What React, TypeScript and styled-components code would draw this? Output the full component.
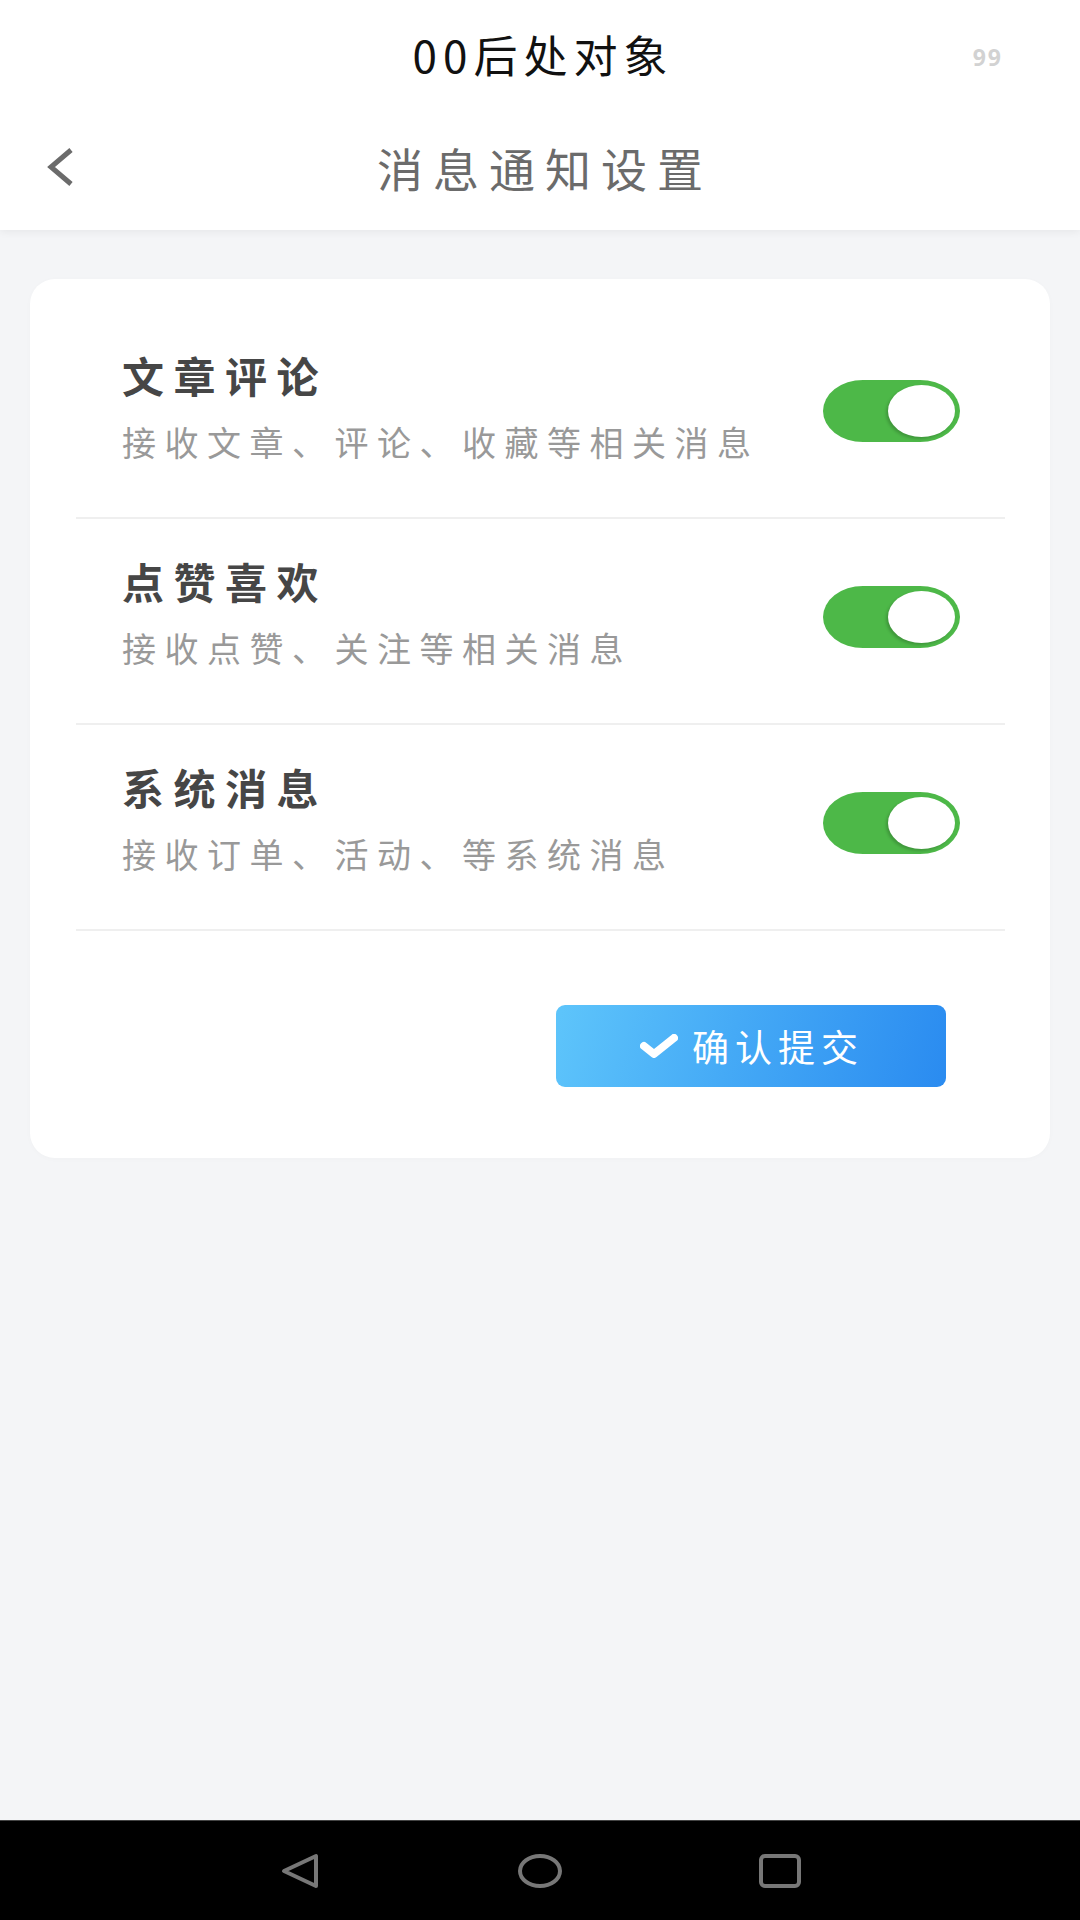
import React, { useState } from 'react';
import styled, { createGlobalStyle } from 'styled-components';

const GlobalStyle = createGlobalStyle`
    html, body {
        margin: 0;
        padding: 0;
        background: #f4f5f7;
        font-family: "Noto Sans CJK SC", "Noto Sans", sans-serif;
    }
    * {
        box-sizing: border-box;
    }
`;

interface INotifyItem {
    key: string;
    title: string;
    desc: string;
}

const items: INotifyItem[] = [
    { key: 'article', title: '文章评论', desc: '接收文章、评论、收藏等相关消息' },
    { key: 'like', title: '点赞喜欢', desc: '接收点赞、关注等相关消息' },
    { key: 'system', title: '系统消息', desc: '接收订单、活动、等系统消息' },
];

const App: React.FC = () => {
    const [enabled, setEnabled] = useState<Record<string, boolean>>({
        article: true,
        like: true,
        system: true,
    });

    const toggle = (key: string) => setEnabled(prev => ({ ...prev, [key]: !prev[key] }));

    return (
        <Screen>
            <GlobalStyle />
            <Header>
                <StatusRow>
                    <span />
                    <AppName>00后处对象</AppName>
                    <Badge>99</Badge>
                </StatusRow>
                <NavRow>
                    <BackButton aria-label="返回">
                        <svg width="28" height="40" viewBox="0 0 28 40">
                            <polyline points="24,3 4,20 24,37" fill="none" stroke="#6b6b6b" strokeWidth="5" />
                        </svg>
                    </BackButton>
                    <PageTitle>消息通知设置</PageTitle>
                    <span />
                </NavRow>
            </Header>
            <Main>
                <Card>
                    {items.map(item => (
                        <Row key={item.key}>
                            <TextBlock>
                                <ItemTitle>{item.title}</ItemTitle>
                                <ItemDesc>{item.desc}</ItemDesc>
                            </TextBlock>
                            <Switch $on={enabled[item.key]} onClick={() => toggle(item.key)}>
                                <Knob $on={enabled[item.key]} />
                            </Switch>
                        </Row>
                    ))}
                    <Actions>
                        <SubmitButton>
                            <svg width="38" height="24" viewBox="0 0 38 24">
                                <polyline
                                    points="4,12 14,20 34,4"
                                    fill="none"
                                    stroke="#fff"
                                    strokeWidth="8"
                                    strokeLinejoin="round"
                                    strokeLinecap="round"
                                />
                            </svg>
                            <span>确认提交</span>
                        </SubmitButton>
                    </Actions>
                </Card>
            </Main>
            <SystemBar>
                <svg width="44" height="36" viewBox="0 0 44 36">
                    <path d="M38 3 L38 33 L6 18 Z" fill="none" stroke="#777" strokeWidth="4" strokeLinejoin="round" />
                </svg>
                <svg width="44" height="36" viewBox="0 0 44 36">
                    <ellipse cx="22" cy="18" rx="20" ry="15" fill="none" stroke="#777" strokeWidth="4" />
                </svg>
                <svg width="44" height="36" viewBox="0 0 44 36">
                    <rect x="3" y="3" width="38" height="30" rx="4" fill="none" stroke="#777" strokeWidth="4" />
                </svg>
            </SystemBar>
        </Screen>
    );
};

export default App;

const Screen = styled.div`
    display: flex;
    flex-direction: column;
    min-height: 1920px;
    background: #f4f5f7;
`;

const Header = styled.header`
    background: #fff;
    box-shadow: 0 2px 8px rgba(0, 0, 0, 0.06);
    position: relative;
    z-index: 1;
`;

const StatusRow = styled.div`
    display: grid;
    grid-template-columns: 1fr auto 1fr;
    align-items: center;
    height: 108px;
`;

const AppName = styled.h1`
    margin: 0;
    padding-left: 6px;
    font-size: 44px;
    font-weight: 400;
    letter-spacing: 6px;
    line-height: 56px;
    color: #111;
`;

const Badge = styled.span`
    justify-self: end;
    padding-right: 77px;
    margin-top: 6px;
    font-family: "Open Sans", "Noto Sans", sans-serif;
    font-size: 23px;
    font-weight: 700;
    letter-spacing: 2px;
    color: #d2d2d2;
`;

const NavRow = styled.div`
    display: grid;
    grid-template-columns: 1fr auto 1fr;
    align-items: center;
    height: 122px;
    padding-bottom: 4px;
`;

const BackButton = styled.button`
    justify-self: start;
    display: flex;
    align-items: center;
    padding: 0 0 0 47px;
    border: 0;
    background: none;
    cursor: pointer;
`;

const PageTitle = styled.h2`
    margin: 0;
    padding-left: 10px;
    font-size: 46px;
    font-weight: 400;
    letter-spacing: 10px;
    line-height: 56px;
    color: #6b6b6b;
`;

const Main = styled.main`
    flex: 1;
    padding: 49px 30px 0;
`;

const Card = styled.section`
    background: #fff;
    border-radius: 25px;
    padding: 34px 0 71px;
    box-shadow: 0 1px 6px rgba(0, 0, 0, 0.02);
`;

const Row = styled.div`
    display: flex;
    align-items: center;
    justify-content: space-between;
    margin: 0 45px 0 46px;
    padding: 36px 45px 52px 46px;
    border-bottom: 2px solid #efefef;
`;

const TextBlock = styled.div`
    display: flex;
    flex-direction: column;
    gap: 18px;
`;

const ItemTitle = styled.div`
    font-size: 42px;
    font-weight: 700;
    letter-spacing: 9.5px;
    line-height: 52px;
    color: #464646;
`;

const ItemDesc = styled.div`
    font-size: 34px;
    font-weight: 400;
    letter-spacing: 8.5px;
    line-height: 46px;
    color: #999;
`;

const Switch = styled.button<{ $on: boolean }>`
    position: relative;
    flex-shrink: 0;
    width: 137px;
    height: 62px;
    margin-top: 8px;
    padding: 0;
    border: 0;
    border-radius: 40px / 31px;
    background: ${p => (p.$on ? '#4db848' : '#dcdcdc')};
    cursor: pointer;
`;

const Knob = styled.span<{ $on: boolean }>`
    position: absolute;
    top: 5px;
    ${p => (p.$on ? 'right: 5px;' : 'left: 5px;')}
    width: 67px;
    height: 52px;
    border-radius: 50%;
    background: #fff;
    box-shadow: -2px 2px 3px rgba(0, 0, 0, 0.18);
`;

const Actions = styled.div`
    display: flex;
    justify-content: flex-end;
    padding: 74px 104px 0 0;
`;

const SubmitButton = styled.button`
    display: flex;
    align-items: center;
    justify-content: center;
    gap: 14px;
    width: 390px;
    height: 82px;
    padding: 0 0 0 2px;
    border: 0;
    border-radius: 9px;
    background: linear-gradient(105deg, #5ec5fb 0%, #45aaf6 45%, #2a8bf0 100%);
    color: #fff;
    font-family: "Noto Sans CJK SC", sans-serif;
    font-size: 37px;
    letter-spacing: 6px;
    cursor: pointer;

    span {
        line-height: 44px;
    }
`;

const SystemBar = styled.nav`
    display: grid;
    grid-template-columns: repeat(3, 44px);
    column-gap: 196px;
    justify-content: center;
    align-items: center;
    height: 100px;
    background: #000;
    border-top: 1px solid #444;
`;
